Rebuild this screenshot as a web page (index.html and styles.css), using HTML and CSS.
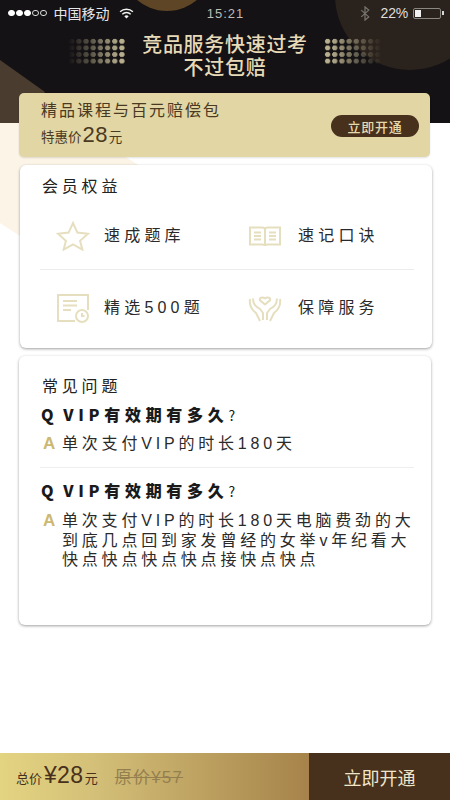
FILE: index.html
```html
<!DOCTYPE html>
<html lang="zh">
<head>
<meta charset="utf-8">
<title>会员权益</title>
<link rel="stylesheet" href="styles.css">
</head>
<body>
<div class="page">
  <svg class="cream" viewBox="0 0 140 115" aria-hidden="true"><polygon points="0,0 70,0 140,43 20,113 0,100"/></svg>
  <header class="hero">
    <span class="deco deco-top"></span>
    <span class="deco deco-right"></span>
    <svg class="deco-tri" viewBox="0 0 45 63" aria-hidden="true"><polygon points="0,0 45,32 22,63 0,63"/></svg>
    <div class="status">
      <div class="status-left">
        <span class="sig"><i class="on"></i><i class="on"></i><i class="on"></i><i></i><i></i></span>
        <span class="carrier">中国移动</span>
        <svg class="wifi" viewBox="0 0 16 12" aria-hidden="true"><path d="M1 4.2a10 10 0 0 1 14 0M3.4 6.8a6.6 6.6 0 0 1 9.2 0" fill="none" stroke="#f2f2f2" stroke-width="1.5"/><path d="M5.6 9a3.4 3.4 0 0 1 4.8 0L8 11.4z" fill="#f2f2f2"/></svg>
      </div>
      <span class="time">15:21</span>
      <div class="status-right">
        <svg class="bt" viewBox="0 0 10 16" aria-hidden="true"><path d="M1 4.4l8 7.2L5 15V1l4 3.4-8 7.2" fill="none" stroke="#77736e" stroke-width="1.3"/></svg>
        <span class="pct">22%</span>
        <span class="batt"><i></i></span>
      </div>
    </div>
    <div class="headline">
      <span class="dots dots-l"></span>
      <h1>竞品服务快速过考<br>不过包赔</h1>
      <span class="dots dots-r"></span>
    </div>
  </header>

  <section class="banner">
    <div>
      <div class="banner-title">精品课程与百元赔偿包</div>
      <div class="banner-price">特惠价<b>28</b>元</div>
    </div>
    <button class="pill">立即开通</button>
  </section>

  <section class="card benefits">
    <h2>会员权益</h2>
    <div class="grid">
      <div class="item">
        <svg class="icon" viewBox="0 0 34 30" aria-hidden="true"><path d="M17 2l4.4 9.6 10.6 1.2-7.9 7 2.2 8.7L17 23.300l-9.300 5.200 2.200-8.700-7.900-7 10.600-1.200z"/></svg>
        <span>速成题库</span>
      </div>
      <div class="item">
        <svg class="icon" viewBox="0 0 34 30" aria-hidden="true"><path d="M2 6.500h12c2 0 3 1 3 2 0-1 1-2 3-2h12v17H20c-2 0-3 .5-3 1.500 0-1-1-1.500-3-1.500H2zM17 8.500V25M6 11.500h7M6 15h7M6 18.500h7M21 11.500h7M21 15h7M21 18.500h7"/></svg>
        <span>速记口诀</span>
      </div>
      <div class="item">
        <svg class="icon" viewBox="0 0 34 30" aria-hidden="true"><path d="M19 28H2V2h30v15M7 8h14M7 12.500h14M7 17h8"/><circle cx="26" cy="23" r="6"/><path d="M26 20v3h2.500"/></svg>
        <span>精选500题</span>
      </div>
      <div class="item">
        <svg class="icon" viewBox="0 0 34 30" aria-hidden="true"><path d="M17 11.500l-5-4.200c-1-2.300 2.300-3.700 5-2 2.700-1.700 6-.3 5 2zM2 6c-1 7 2 11 6 14l4 8M5 5.500c0 6 3 8 7 10.500l3 4v7M32 6c1 7-2 11-6 14l-4 8M29 5.500c0 6-3 8-7 10.500l-3 4v7"/></svg>
        <span>保障服务</span>
      </div>
    </div>
  </section>

  <section class="card faq">
    <h2>常见问题</h2>
    <div class="qa">
      <p class="q"><span class="qm">Q</span>VIP有效期有多久<small>?</small></p>
      <div class="a"><b>A</b><p>单次支付VIP的时长180天</p></div>
    </div>
    <div class="qa second">
      <p class="q"><span class="qm">Q</span>VIP有效期有多久<small>?</small></p>
      <div class="a"><b>A</b><p>单次支付VIP的时长180天电脑费劲的大到底几点回到家发曾经的女举v年纪看大快点快点快点快点接快点快点</p></div>
    </div>
  </section>

  <footer class="bar">
    <div class="bar-price">
      <span class="lbl">总价</span><span class="amt">¥28</span><span class="lbl">元</span>
      <s class="orig">原价¥57</s>
    </div>
    <button class="buy">立即开通</button>
  </footer>
</div>
</body>
</html>
```
FILE: styles.css
```css
* { box-sizing: border-box; }
html, body { margin: 0; padding: 0; background: #fff; }
body { font-family: "Liberation Sans", "Noto Sans CJK SC", sans-serif; }
.page { position: relative; width: 450px; height: 800px; display: flex; flex-direction: column; overflow: hidden; }
.cream { position: absolute; left: 0; top: 123px; width: 140px; height: 115px; }
.cream polygon { fill: #fbf4e7; }

.hero { position: relative; height: 123px; background: #141214; overflow: hidden; flex: none; }
.deco { position: absolute; border-radius: 50%; }
.deco-top { left: 121px; top: -81px; width: 92px; height: 92px; background: #5e4526; }
.deco-right { left: 335px; top: -80px; width: 150px; height: 150px; background: #2a221c; }
.deco-tri { position: absolute; left: 0; top: 60px; width: 45px; height: 63px; }
.deco-tri polygon { fill: #4a3c2e; }

.status { position: relative; display: grid; grid-template-columns: 1fr auto 1fr; align-items: center; height: 26px; padding: 0 7px 0 8px; color: #eee; }
.status-left, .status-right { display: flex; align-items: center; }
.status-right { justify-content: flex-end; }
.sig { display: flex; gap: 1.500px; margin-right: 7px; }
.sig i { width: 6.500px; height: 6.500px; border-radius: 50%; border: 1px solid #ddd; }
.sig i.on { background: #fff; border-color: #fff; }
.carrier { font-size: 14px; color: #e6e6e6; }
.wifi { width: 15px; height: 11px; margin-left: 9px; }
.time { font-size: 13px; letter-spacing: 1px; color: #bdbdb8; }
.bt { width: 10px; height: 15px; margin-right: 11px; }
.pct { font-size: 14px; color: #e0dedb; letter-spacing: -.2px; }
.batt { position: relative; width: 28px; height: 11px; margin: 0 2px 0 5px; border: 1px solid #8a8680; border-radius: 2px; padding: 1px; }
.batt i { display: block; width: 6px; height: 100%; background: #f2f2f2; }
.batt::after { content: ""; position: absolute; right: -3.500px; top: 2.500px; width: 2px; height: 4px; background: #d8d8d8; }

.headline { position: relative; display: flex; justify-content: center; margin-top: 8px; }
.headline h1 { margin: 0 16px; font-size: 20px; font-weight: 500; line-height: 23px; letter-spacing: .7px; text-align: center; color: #e6dab8; }
.dots { width: 58px; height: 26px; margin-top: 4px; background-image: radial-gradient(circle, #b8af8e 2.300px, transparent 2.900px); background-size: 7.200px 6.600px; }
.dots-l { -webkit-mask-image: linear-gradient(to right, transparent, #000 90%); mask-image: linear-gradient(to right, transparent, #000 90%); }
.dots-r { -webkit-mask-image: linear-gradient(to left, transparent, #000 90%); mask-image: linear-gradient(to left, transparent, #000 90%); }

.banner { position: relative; flex: none; display: flex; justify-content: space-between; align-items: center; width: 411px; height: 64px; margin: -30px 0 0 19px; padding: 0 11px 0 22px; background: #e2d6a5; border-radius: 5px; box-shadow: 0 1px 2px rgba(0,0,0,.12); color: #4b3a22; }
.banner-title { font-size: 16px; line-height: 22px; letter-spacing: 2px; }
.banner-price { font-size: 13.500px; line-height: 25px; display: flex; align-items: baseline; }
.banner-price b { font-size: 22px; font-weight: 400; margin: 0 1px; letter-spacing: .4px; }
.pill { width: 88px; height: 22px; margin-top: 2px; padding: 0; border: 0; border-radius: 11px; background: #47311c; color: #e6d9ab; font: 500 13px "Liberation Sans", "Noto Sans CJK SC", sans-serif; letter-spacing: .8px; }

.card { position: relative; flex: none; width: 412px; background: #fff; border-radius: 6px; box-shadow: 0 1px 3px rgba(0,0,0,.38); }
.card h2 { margin: 0; font-size: 16px; font-weight: 400; letter-spacing: 3.800px; color: #222; line-height: 20px; }

.benefits { height: 183px; margin: 8px 0 0 20px; padding: 12px 18px 0 22px; }
.grid { display: grid; grid-template-columns: 192px 1fr; grid-template-rows: 73px 75px; width: 374px; margin-left: -2px; }
.item { display: flex; align-items: center; padding-left: 16px; font-size: 16px; letter-spacing: 4.200px; color: #2a2a2a; }
.item:nth-child(-n+2) { padding-top: 6px; border-bottom: 1px solid #ececec; }
.item span { line-height: 22px; }
.icon { width: 34px; height: 30px; margin-right: 14px; flex: none; fill: none; stroke: #e6dfbf; stroke-width: 2; }
.item:nth-child(even) .icon { margin-right: 16px; }

.faq { height: 269px; margin: 8px 0 0 19px; padding: 21px 17px 0 23px; }
.qa { margin-left: -1px; }
.q { margin: 7px 0 0; font-family: "Noto Sans CJK SC", sans-serif; font-size: 16px; font-weight: 900; letter-spacing: 4.700px; line-height: 20px; color: #1a1a1a; white-space: nowrap; }
.qm { margin-right: 5px; font-size: 16px; }
.q small { font-size: 14px; font-weight: 400; }
.a { display: flex; margin-top: 9px; }
.a b { width: 21px; padding-left: 2px; flex: none; font-size: 17px; font-weight: 700; line-height: 20px; color: #cdb873; }
.a p { flex: none; margin: 0; width: 360px; font-size: 16px; line-height: 19.500px; letter-spacing: 3.800px; color: #2a2a2a; }
.second { width: 374px; margin: 13px 0 0 -2px; padding: 12px 0 0 1px; border-top: 1px solid #eeeeee; }
.second .q { margin-top: 0; }
.second .a { margin-top: 10px; }

.bar { flex: none; display: flex; margin-top: auto; height: 47px; }
.bar-price { width: 309px; display: flex; align-items: baseline; padding: 9px 0 0 16px; background: linear-gradient(to right, #e3d481, #d4c078 30%, #a6834a); color: #47311c; }
.lbl { font-size: 13px; }
.amt { font-size: 23px; margin: 0 1.500px 0 2px; letter-spacing: .3px; }
.orig { margin-left: 17px; font-size: 17px; letter-spacing: 1.200px; color: #94804f; }
.buy { flex: 1; border: 0; padding: 0; background: #47311c; color: #f0e6cc; font: 400 18px "Liberation Sans", "Noto Sans CJK SC", sans-serif; }
```
